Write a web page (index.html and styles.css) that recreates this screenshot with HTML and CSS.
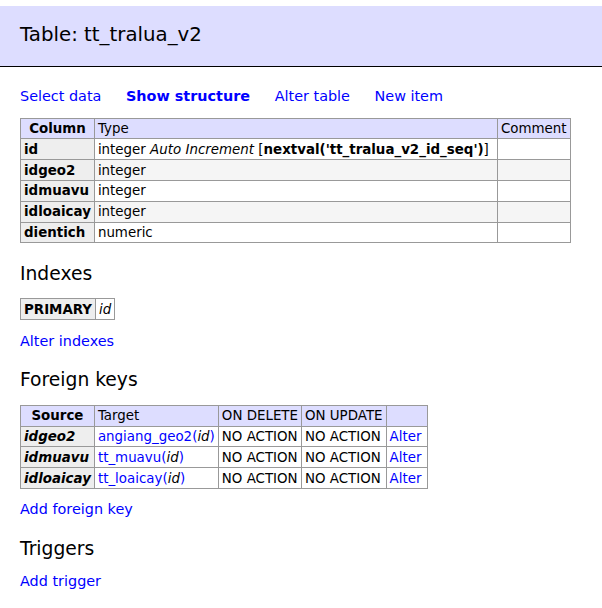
FILE: index.html
```html
<!DOCTYPE html>
<html>
<head>
<meta charset="utf-8">
<link rel="stylesheet" href="styles.css">
</head>
<body>
<div class="content">
<h2 class="title">Table: tt_tralua_v2</h2>
<p class="links"><a href="#">Select data</a> <a href="#" class="active">Show structure</a> <a href="#">Alter table</a> <a href="#">New item</a></p>
<table class="grid odds">
<thead><tr><th>Column</th><td class="type">Type</td><td>Comment</td></tr></thead>
<tbody>
<tr><th>id</th><td>integer <i>Auto Increment</i> <span class="def">[<b>nextval('tt_tralua_v2_id_seq')</b>]</span></td><td></td></tr>
<tr><th>idgeo2</th><td>integer</td><td></td></tr>
<tr><th>idmuavu</th><td>integer</td><td></td></tr>
<tr><th>idloaicay</th><td>integer</td><td></td></tr>
<tr><th>dientich</th><td>numeric</td><td></td></tr>
</tbody>
</table>
<h3>Indexes</h3>
<table class="grid">
<tbody><tr><th>PRIMARY</th><td><i>id</i></td></tr></tbody>
</table>
<p class="links"><a href="#">Alter indexes</a></p>
<h3>Foreign keys</h3>
<table class="grid">
<thead><tr><th>Source</th><td>Target</td><td>ON DELETE</td><td>ON UPDATE</td><td class="act"></td></tr></thead>
<tbody>
<tr><th><i>idgeo2</i></th><td><a href="#">angiang_geo2(<i>id</i>)</a></td><td>NO ACTION</td><td>NO ACTION</td><td><a href="#">Alter</a></td></tr>
<tr><th><i>idmuavu</i></th><td><a href="#">tt_muavu(<i>id</i>)</a></td><td>NO ACTION</td><td>NO ACTION</td><td><a href="#">Alter</a></td></tr>
<tr><th><i>idloaicay</i></th><td><a href="#">tt_loaicay(<i>id</i>)</a></td><td>NO ACTION</td><td>NO ACTION</td><td><a href="#">Alter</a></td></tr>
</tbody>
</table>
<p class="links"><a href="#">Add foreign key</a></p>
<h3>Triggers</h3>
<p class="links"><a href="#">Add trigger</a></p>
</div>
</body>
</html>
```
FILE: styles.css
```css
body {
  margin: 0;
  color: #000;
  background: #fff;
  font: 14.4px/1.25 "DejaVu Sans", Verdana, sans-serif;
}
a {
  color: #00f;
  text-decoration: none;
}
a i {
  color: #000;
}
.content {
  padding: 6px 0 20px 20px;
}
.title {
  font-size: 19.8px;
  font-weight: normal;
  margin: 0 0 20px -20px;
  padding: 17px 20px 18px 20px;
  border-bottom: 1px solid #000;
  background: #ddf;
}
p {
  margin: 11.5px 20px 0 0;
}
.links a {
  white-space: nowrap;
  margin-right: 20px;
}
.links a.active {
  font-weight: bold;
}
h3 {
  font-weight: normal;
  font-size: 18.72px;
  margin: 18.72px 0 0;
}
table {
  margin: 12.96px 20px 0 0;
  border-collapse: collapse;
  font-size: 13.4px;
  line-height: 15px;
}
td, th {
  border: 1px solid #999;
  padding: 2.4px 3px;
  text-align: left;
  vertical-align: top;
}
th {
  background: #eee;
}
thead th {
  text-align: center;
  padding: 2.4px 5.5px;
}
thead td, thead th {
  background: #ddf;
}
.odds tbody tr:nth-child(2n) td {
  background: #f5f5f5;
}
.type {
  width: 396px;
}
.act {
  width: 34px;
}
.def {
  color: #000;
}
```
